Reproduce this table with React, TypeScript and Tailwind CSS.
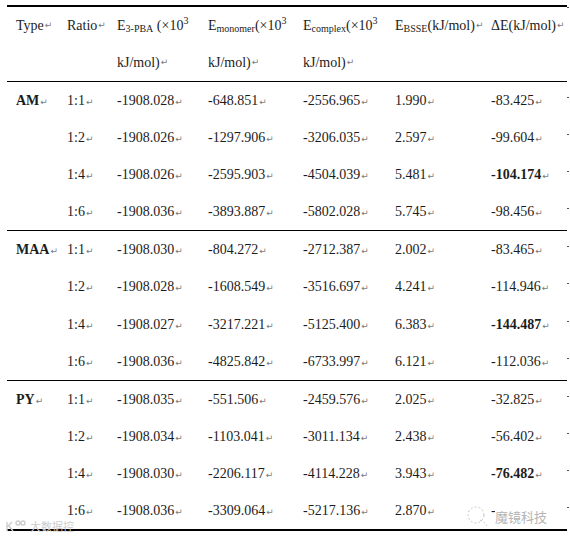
import type { JSX, ReactNode } from "react";

/* Table data */
type Row = { ratio: string; pba: string; mono: string; comp: string; bsse: string; de: string; bold?: boolean };
type Group = { type: string; h: string; rows: Row[] };

const groups: Group[] = [
  {
    type: "AM",
    h: "h-[149px]",
    rows: [
      { ratio: "1:1", pba: "-1908.028", mono: "-648.851", comp: "-2556.965", bsse: "1.990", de: "-83.425" },
      { ratio: "1:2", pba: "-1908.026", mono: "-1297.906", comp: "-3206.035", bsse: "2.597", de: "-99.604" },
      { ratio: "1:4", pba: "-1908.026", mono: "-2595.903", comp: "-4504.039", bsse: "5.481", de: "-104.174", bold: true },
      { ratio: "1:6", pba: "-1908.036", mono: "-3893.887", comp: "-5802.028", bsse: "5.745", de: "-98.456" },
    ],
  },
  {
    type: "MAA",
    h: "h-[150px]",
    rows: [
      { ratio: "1:1", pba: "-1908.030", mono: "-804.272", comp: "-2712.387", bsse: "2.002", de: "-83.465" },
      { ratio: "1:2", pba: "-1908.028", mono: "-1608.549", comp: "-3516.697", bsse: "4.241", de: "-114.946" },
      { ratio: "1:4", pba: "-1908.027", mono: "-3217.221", comp: "-5125.400", bsse: "6.383", de: "-144.487", bold: true },
      { ratio: "1:6", pba: "-1908.036", mono: "-4825.842", comp: "-6733.997", bsse: "6.121", de: "-112.036" },
    ],
  },
  {
    type: "PY",
    h: "h-[150px]",
    rows: [
      { ratio: "1:1", pba: "-1908.035", mono: "-551.506", comp: "-2459.576", bsse: "2.025", de: "-32.825" },
      { ratio: "1:2", pba: "-1908.034", mono: "-1103.041", comp: "-3011.134", bsse: "2.438", de: "-56.402" },
      { ratio: "1:4", pba: "-1908.030", mono: "-2206.117", comp: "-4114.228", bsse: "3.943", de: "-76.482", bold: true },
      { ratio: "1:6", pba: "-1908.036", mono: "-3309.064", comp: "-5217.136", bsse: "2.870", de: "-" },
    ],
  },
];

const cols = "grid grid-cols-[60px_50px_91px_95px_92px_96px_76px_3px]";

/* Word paragraph mark */
const Mark = (): JSX.Element => (
  <span className="ml-[1px] font-['DejaVu_Sans',sans-serif] text-[9px] font-normal text-[#7a7a7a]">↵</span>
);

const Sub = ({ children }: { children: ReactNode }): JSX.Element => (
  <span className="relative top-[3px] text-[10px]">{children}</span>
);

const Sup = ({ children }: { children: ReactNode }): JSX.Element => (
  <span className="relative -top-[5px] text-[10px]">{children}</span>
);

const Edge = (): JSX.Element => (
  <div className="flex items-center">
    <span className="mb-[6px] block h-[1px] w-[2px] bg-[#555]" />
  </div>
);

export default function App(): JSX.Element {
  return (
    <div className="relative h-[537px] w-[570px] overflow-hidden bg-white font-['Liberation_Serif','Noto_Sans_CJK_SC',serif] text-[14px] text-[#1c1c1c]">
      <div className="ml-[7px] mt-[5px] w-[560px] border-t-2 border-black">
        {/* Header */}
        <div className={`${cols} h-[75px] border-b border-black`}>
          <div className="flex h-[37px] items-center pl-[9px]">
            Type<Mark />
          </div>
          <div className="flex h-[37px] items-center">
            Ratio<Mark />
          </div>
          <div className="flex flex-col">
            <div className="flex h-[37px] items-center whitespace-pre">
              E<Sub>3-PBA</Sub> (×10<Sup>3</Sup>
            </div>
            <div className="flex h-[37px] items-center">
              kJ/mol)<Mark />
            </div>
          </div>
          <div className="flex flex-col">
            <div className="flex h-[37px] items-center whitespace-pre">
              E<Sub>monomer</Sub>(×10<Sup>3</Sup>
            </div>
            <div className="flex h-[37px] items-center">
              kJ/mol)<Mark />
            </div>
          </div>
          <div className="flex flex-col">
            <div className="flex h-[37px] items-center whitespace-pre">
              E<Sub>complex</Sub>(×10<Sup>3</Sup>
            </div>
            <div className="flex h-[37px] items-center">
              kJ/mol)<Mark />
            </div>
          </div>
          <div className="flex h-[37px] items-center whitespace-pre">
            E<Sub>BSSE</Sub>(kJ/mol)<Mark />
          </div>
          <div className="flex h-[37px] items-center whitespace-pre">
            ΔE(kJ/mol)<Mark />
          </div>
          <div className="h-[37px]">
            <Edge />
          </div>
        </div>

        {/* Body groups */}
        {groups.map((g, gi) => (
          <div
            key={g.type}
            className={`grid grid-rows-4 ${g.h} ${gi === groups.length - 1 ? "border-b-2" : "border-b"} border-black`}
          >
            {g.rows.map((r, ri) => (
              <div key={r.ratio} className={`${cols} items-center`}>
                <div className="pl-[9px] font-bold">
                  {ri === 0 && (
                    <>
                      {g.type}
                      <Mark />
                    </>
                  )}
                </div>
                <div>
                  {r.ratio}
                  <Mark />
                </div>
                <div>
                  {r.pba}
                  <Mark />
                </div>
                <div>
                  {r.mono}
                  <Mark />
                </div>
                <div>
                  {r.comp}
                  <Mark />
                </div>
                <div>
                  {r.bsse}
                  <Mark />
                </div>
                <div className={r.bold ? "font-bold" : ""}>
                  {r.de}
                  {r.de !== "-" && <Mark />}
                </div>
                <Edge />
              </div>
            ))}
          </div>
        ))}
      </div>

      {/* Watermark, bottom left */}
      <div className="absolute left-[5px] top-[520px] flex items-center gap-[3px] font-['Noto_Sans_CJK_SC',sans-serif] text-[11px] leading-none text-[#cdcdcd]">
        <svg width="22" height="12" viewBox="0 0 22 12" fill="none" stroke="#cdcdcd" strokeWidth="1.4">
          <path d="M2 2v9M2 7l5-5M4 6l4 5" />
          <circle cx="13" cy="3" r="2" />
          <circle cx="18" cy="3" r="2" />
        </svg>
        <span>大数据控</span>
      </div>

      {/* Watermark, bottom right */}
      <div className="absolute left-[465px] top-[505px] flex items-center gap-[6px] font-['Noto_Sans_CJK_SC',sans-serif] text-[13px] leading-none text-[#b4b4b4]">
        <svg width="24" height="22" viewBox="0 0 24 22" fill="none" stroke="#c4c4c4" strokeWidth="1" strokeDasharray="2 2">
          <circle cx="11" cy="10" r="8" />
          <path d="M15 15c3 1 5 3 7 6" />
        </svg>
        <span className="bg-white">魔镜科技</span>
      </div>
    </div>
  );
}
